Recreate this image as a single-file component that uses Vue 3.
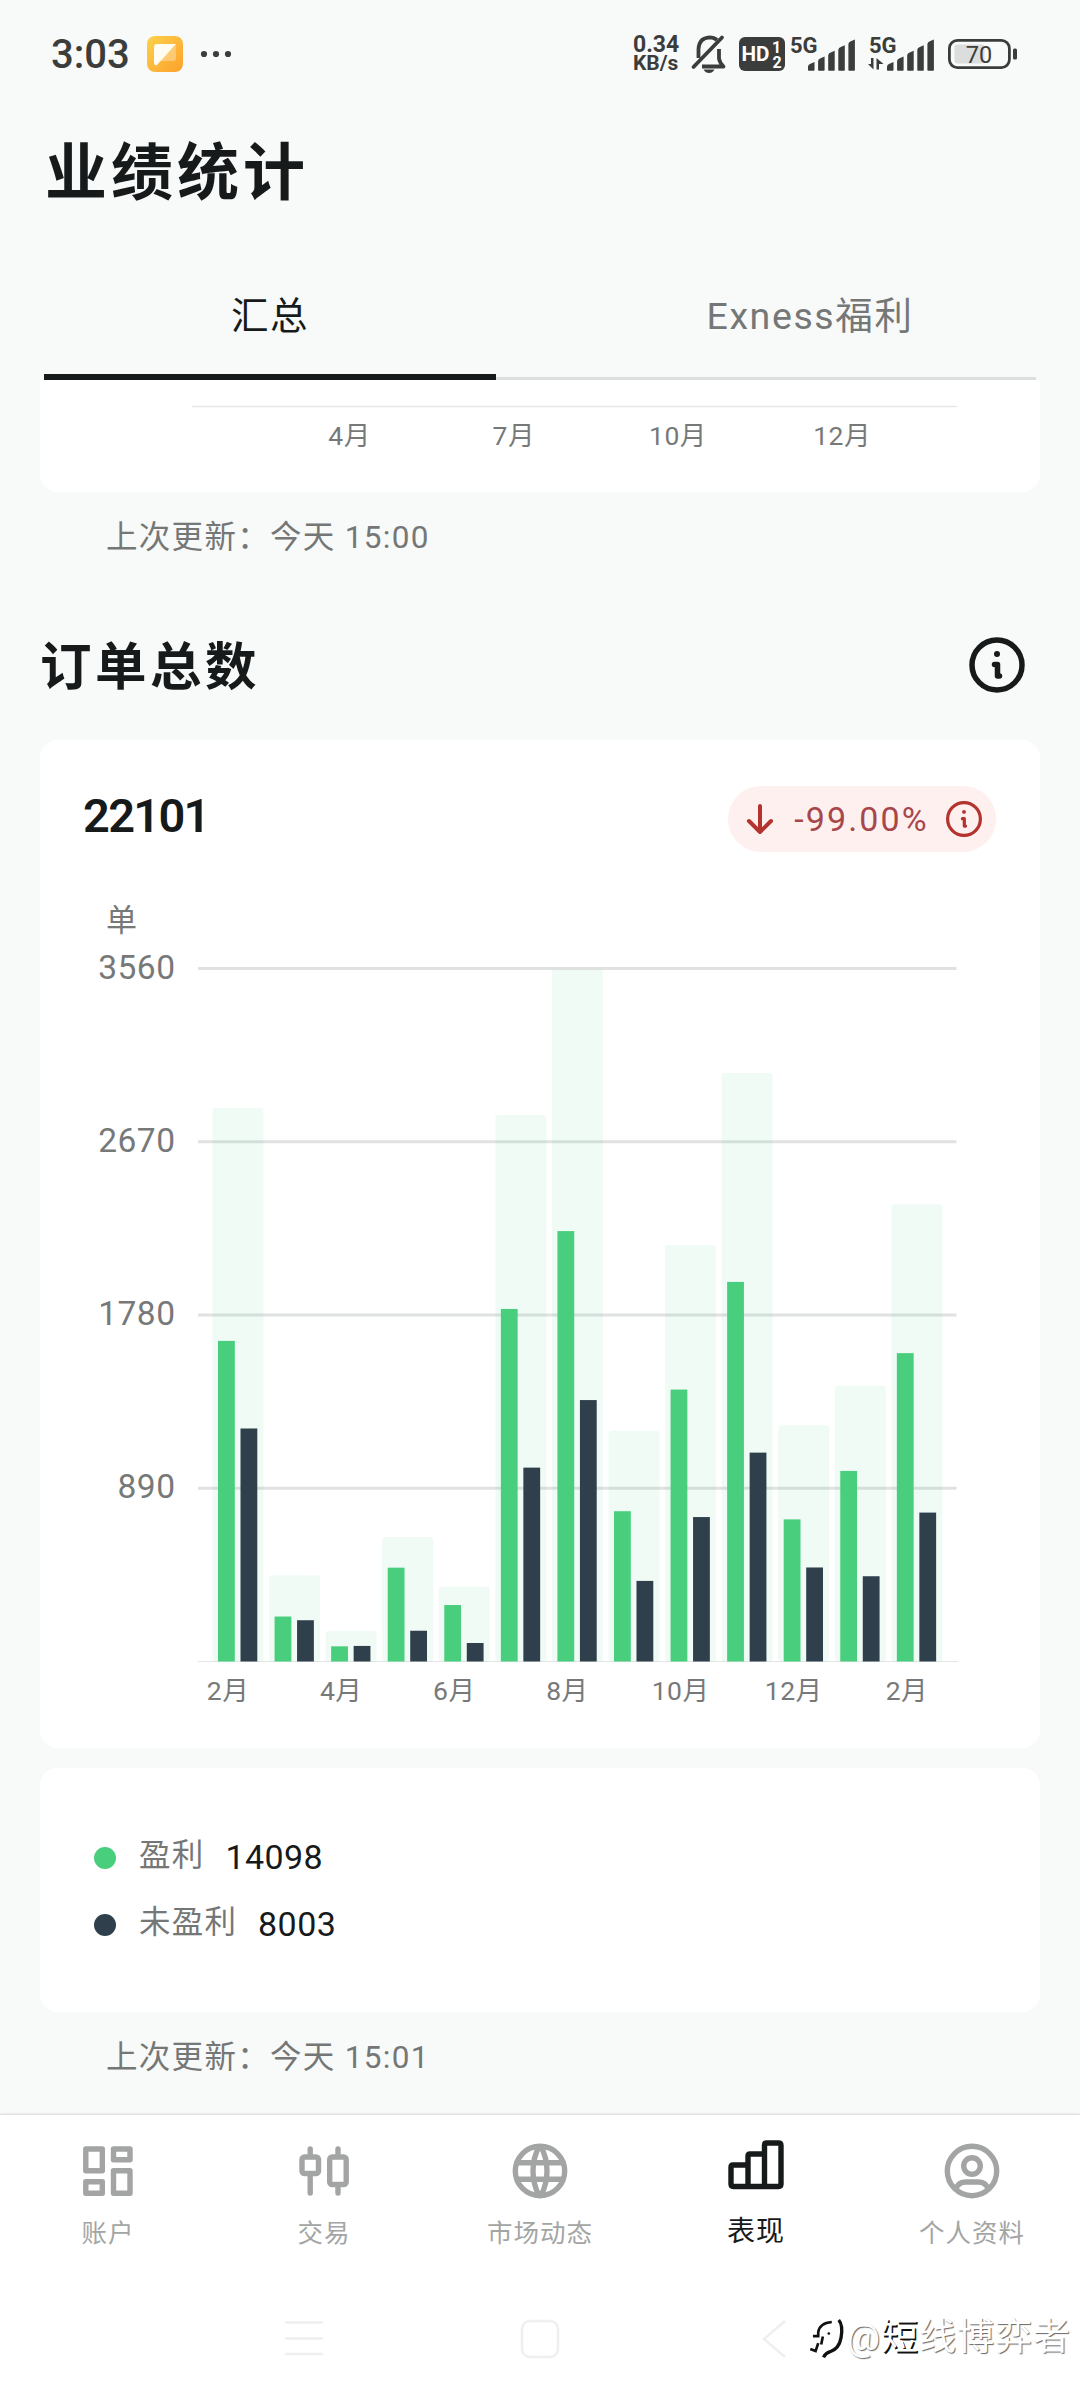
<template>
  <div class="screen">
    <!-- 状态栏 -->
    <header class="status-bar">
      <div class="status-left">
        <span class="clock">3:03</span>
        <svg class="app-badge" viewBox="0 0 36 36">
          <defs>
            <linearGradient id="badge" x1="0" y1="0" x2="1" y2="1">
              <stop offset="0" stop-color="#fcd14a" />
              <stop offset="1" stop-color="#fda12c" />
            </linearGradient>
          </defs>
          <rect width="36" height="36" rx="8" fill="url(#badge)" />
          <path d="M8 29 29 9v13q0 3-3 3H13z" fill="#fff" opacity=".3" />
          <path d="M7 11q0-3 3-3h19L10 29q-3 1-3-2z" fill="#fffdf2" />
        </svg>
        <svg class="more" viewBox="0 0 32 8">
          <circle v-for="x in [4, 16, 28]" :key="x" :cx="x" cy="4" r="3.1" />
        </svg>
      </div>
      <div class="status-right">
        <div class="net-speed"><span>0.34</span><span>KB/s</span></div>
        <svg class="bell" viewBox="0 0 34 38">
          <path d="M6.500 23V14Q7 3 17.500 2.300q4.500 0 7.500 2.700M10 31.500h21.500q-4-4-4.500-8V14" fill="none" stroke="#3b3d3c" stroke-width="3.800" stroke-linejoin="round" />
          <path d="M1.500 32 30 2.500" stroke="#3b3d3c" stroke-width="3.800" stroke-linecap="round" />
          <path d="M11.500 34.500h11q-2 3.500-5.500 3.500t-5.500-3.500z" />
        </svg>
        <svg class="hd" viewBox="0 0 46 34">
          <rect width="46" height="34" rx="6" />
          <text x="2.500" y="24" font-size="21" textLength="28" lengthAdjust="spacingAndGlyphs" class="hd-text">HD</text>
          <text x="33" y="15.500" font-size="16" class="hd-text">1</text>
          <text x="33.500" y="30.500" font-size="16" class="hd-text">2</text>
        </svg>
        <svg class="signal" viewBox="0 0 64 36">
          <text x="-1" y="17" class="net-type">5G</text>
          <path v-for="(d, i) in signalBars" :key="i" :d="d" />
        </svg>
        <svg class="signal second" viewBox="-2 0 66 36">
          <text x="-1" y="17" class="net-type">5G</text>
          <path d="M-2 28h3v-6h2.500v11.500zM6.500 22v11.500H9V28h4.500z" />
          <path v-for="(d, i) in signalBars" :key="i" :d="d" />
        </svg>
        <svg class="battery" viewBox="0 0 69 30">
          <rect x="6.500" y="5.500" width="30" height="19" rx="3" fill="#dcdedd" />
          <rect x="1.400" y="1.400" width="60" height="27.200" rx="8" fill="none" stroke="#3b3d3c" stroke-width="2.800" />
          <rect x="65" y="9.500" width="4" height="11" rx="1.500" />
          <text x="31" y="23.500" font-size="23.500" text-anchor="middle">70</text>
        </svg>
      </div>
    </header>

    <h1 class="page-title">业绩统计</h1>

    <nav class="tabs">
      <div class="tab active">汇总</div>
      <div class="tab">Exness福利</div>
    </nav>

    <main class="content">
      <section class="card card-prev">
        <svg class="prev-chart" viewBox="0 0 1000 112">
          <line x1="152" y1="26.500" x2="917" y2="26.500" stroke="#e6e8e7" stroke-width="1.500" />
          <text v-for="(m, i) in prevMonths" :key="m" :x="309.500 + i * 164.200" y="64.500" class="month">{{ m }}</text>
        </svg>
      </section>
      <p class="updated">上次更新：今天 15:00</p>

      <div class="section-head">
        <h2>订单总数</h2>
        <svg class="info" viewBox="0 0 56 56">
          <circle cx="28" cy="28" r="25" />
          <circle cx="28" cy="17" r="3" class="dot" />
          <path d="M25.500 27.500h3V39h2" />
        </svg>
      </div>

      <section class="card card-chart">
        <div class="card-head">
          <strong class="total">22101</strong>
          <div class="pill">
            <svg class="arrow" viewBox="0 0 26 30">
              <path d="M13 2v26M2 17l11 11 11-11" />
            </svg>
            <span>-99.00%</span>
            <svg class="info small" viewBox="0 0 56 56">
              <circle cx="28" cy="28" r="25.500" />
              <circle cx="28" cy="17" r="3" class="dot" />
              <path d="M25.500 27.500h3V39h2" />
            </svg>
          </div>
        </div>
        <svg class="chart" viewBox="0 0 1000 896">
          <text x="66" y="79" class="unit">单</text>
          <g v-for="tick in ticks" :key="tick">
            <line x1="158" :y1="toY(tick)" x2="916.500" :y2="toY(tick)" stroke="#e0e2e1" stroke-width="2.800" />
            <text x="135.500" :y="toY(tick) + 10" class="tick">{{ tick }}</text>
          </g>
          <line x1="158" y1="809.500" x2="918" y2="809.500" stroke="#e4e6e5" stroke-width="1" />
          <!-- 每月：总数、盈利、未盈利 -->
          <g v-for="(o, i) in orders" :key="i">
            <rect :x="172.500 + i * step" :y="toY(o[0] + o[1])" width="51" :height="base - toY(o[0] + o[1])" rx="3" class="bar-total" />
            <rect :x="178 + i * step" :y="toY(o[0])" width="16.800" :height="base - toY(o[0])" class="bar-profit" />
            <rect :x="200.500 + i * step" :y="toY(o[1])" width="16.800" :height="base - toY(o[1])" class="bar-loss" />
          </g>
          <text v-for="(m, i) in months" :key="i" :x="188 + i * step * 2" y="848" class="month">{{ m }}</text>
        </svg>
      </section>

      <section class="card card-legend">
        <div v-for="item in legend" :key="item.label" class="legend-row">
          <i class="legend-dot" :class="item.type"></i>
          <span class="legend-label">{{ item.label }}</span>
          <span class="legend-value">{{ item.value }}</span>
        </div>
      </section>
      <p class="updated">上次更新：今天 15:01</p>
    </main>

    <!-- 底部导航 -->
    <nav class="bottom-nav">
      <div class="nav-item">
        <svg viewBox="-31 -28 62 56">
          <rect x="-22.200" y="-22" width="16.500" height="21.800" />
          <rect x="-22.200" y="10.800" width="16.500" height="11.400" />
          <rect x="5.500" y="-22" width="16.500" height="10.800" />
          <rect x="5.500" y="-.2" width="16.500" height="22.400" />
        </svg>
        <span>账户</span>
      </div>
      <div class="nav-item">
        <svg viewBox="-31 -28 62 56">
          <rect x="-22" y="-14" width="16.500" height="16.500" rx="2.500" />
          <rect x="5.700" y="-14" width="16.500" height="27.500" rx="2.500" />
          <path d="M-13.800-22v7M-13.800 4v18M14-22v7M14 15v7" stroke-linecap="round" />
        </svg>
        <span>交易</span>
      </div>
      <div class="nav-item">
        <svg viewBox="-31 -28 62 56">
          <circle r="24.700" />
          <path d="M-23-8.300h46M-23 8.300h46M-1-24.500Q-7-13-7 0t6 24.500M1-24.500Q7-13 7 0t-6 24.500" />
        </svg>
        <span>市场动态</span>
      </div>
      <div class="nav-item active">
        <svg viewBox="-31 -28 62 56">
          <path d="M-25 16V-1q0-2 2-2h15v-9q0-2 2-2H8.500v-9q0-2 2-2h12q2.500 0 2.500 2.500V16q0 2.500-2.500 2.500h-45Q-25 18.500-25 16zM-8-3v21.500M8.500-14v32.500" />
        </svg>
        <span>表现</span>
      </div>
      <div class="nav-item">
        <svg viewBox="-31 -28 62 56">
          <circle r="24.700" />
          <circle cy="-5" r="8.300" />
          <path d="M-16 18q2-7 10-7H6q8 0 10 7" />
        </svg>
        <span>个人资料</span>
      </div>
    </nav>

    <footer class="system-nav">
      <svg viewBox="0 0 40 40"><path d="M1 3.500h38M1 19.500h38M1 35h38" /></svg>
      <svg viewBox="0 0 40 40"><rect x="2" y="2" width="36" height="36" rx="8" /></svg>
      <svg viewBox="0 0 40 40"><path d="M29 2 8 20l21 18" /></svg>
    </footer>

    <div class="watermark">
      <svg viewBox="250 130 115 125">
        <path d="M268 187h16v-12q4-28 41-31M298 188l-5 24" />
        <path d="M284 208l-8 24-16-6" stroke-width="5" />
        <path d="M346 138q14 16 7 54-6 33-33 42-14 4-20 17" class="thick" />
        <circle cx="316" cy="179" r="4" />
      </svg>
      <span><b>@</b><b class="first">短</b>线博弈者</span>
    </div>
  </div>
</template>

<script setup>
const base = 809.5;
const step = 56.57;
const toY = (value) => base - (value / 3560) * 693;

const ticks = [3560, 2670, 1780, 890];
const prevMonths = ['4月', '7月', '10月', '12月'];
const months = ['2月', '4月', '6月', '8月', '10月', '12月', '2月'];

// [盈利, 未盈利]
const orders = [
  [1647, 1197], [231, 212], [78, 80], [482, 158], [290, 95],
  [1811, 996], [2211, 1343], [772, 414], [1397, 742], [1950, 1073],
  [730, 483], [979, 438], [1584, 765]
];

const legend = [
  { label: '盈利', value: 14098, type: 'profit' },
  { label: '未盈利', value: 8003, type: 'loss' }
];

// 信号格，顶部略倾斜
const signalBars = [0, 1, 2, 3, 4].map((i) => {
  const x = 17 + i * 10.1;
  const top = 26.5 - i * 5.6;
  return `M${x} ${top + 4}q0-2 3-3l3.500-1.500V34q0 .7-.7.7h-5.100q-.7 0-.7-.7z`;
});
</script>

<style>
body {
  background: #f8faf9;
}
</style>

<style scoped>
.screen {
  position: relative;
  width: 1080px;
  height: 2400px;
  overflow: hidden;
  display: flex;
  flex-direction: column;
  background: #f8faf9;
  color: #171a1a;
  font-family: Roboto, "Noto Sans CJK SC", sans-serif;
}

svg {
  display: block;
  flex: none;
  overflow: visible;
}

.status-bar {
  height: 108px;
  flex: none;
  display: flex;
  justify-content: space-between;
  align-items: center;
  padding: 0 63px 0 51px;
  color: #3b3d3c;
  fill: #3b3d3c;
}

.status-left,
.status-right {
  display: flex;
  align-items: center;
}

.clock {
  width: 96px;
  font-size: 40px;
  font-weight: 500;
}

.app-badge {
  width: 36px;
  height: 36px;
}

.more {
  width: 32px;
  height: 8px;
  margin-left: 17px;
}

.net-speed {
  width: 48px;
  display: flex;
  flex-direction: column;
  font-size: 23px;
  line-height: 19px;
  font-weight: 700;
  white-space: nowrap;
}

.net-speed span:last-child {
  font-size: 21px;
}

.bell {
  width: 34px;
  height: 38px;
  margin-left: 11px;
}

.hd {
  width: 46px;
  height: 34px;
  margin-left: 13px;
}

.hd-text {
  fill: #fff;
  font-weight: 700;
}

.signal {
  width: 64px;
  height: 36px;
  margin-left: 6px;
}

.signal.second {
  width: 66px;
  margin-left: 13px;
}

.net-type {
  font-size: 22px;
  font-weight: 700;
}

.battery {
  width: 69px;
  height: 30px;
  margin-left: 14px;
}

.page-title {
  margin: 0;
  flex: none;
  height: 126px;
  padding-left: 45px;
  line-height: 131px;
  font-size: 62px;
  font-weight: 700;
  letter-spacing: 4px;
}

.tabs {
  flex: none;
  height: 146px;
  margin: 0 44px;
  box-sizing: border-box;
  display: flex;
  justify-content: space-between;
  box-shadow: inset 0 -3px #dcdfde;
}

.tab {
  width: 452px;
  box-sizing: border-box;
  padding-top: 50px;
  line-height: 64px;
  text-align: center;
  font-size: 37.5px;
  letter-spacing: 1.6px;
  color: #757777;
}

.tab.active {
  color: #171a1a;
  border-bottom: 6px solid #171a1a;
}

.content {
  flex: none;
  height: 1735px;
  padding: 0 40px;
}

.card {
  background: #fff;
  border-radius: 18px;
}

.card-prev {
  height: 112px;
  border-radius: 0 0 18px 18px;
}

.prev-chart {
  width: 1000px;
  height: 112px;
}

.month {
  font-size: 26.5px;
  fill: #777979;
  text-anchor: middle;
  letter-spacing: 0.5px;
}

.updated {
  margin: 0;
  height: 90px;
  line-height: 92px;
  padding-left: 66px;
  font-size: 31.5px;
  letter-spacing: 1.3px;
  color: #757777;
}

.section-head {
  height: 158px;
  box-sizing: border-box;
  padding: 8px 15px 0 0;
  display: flex;
  justify-content: space-between;
  align-items: center;
}

.section-head h2 {
  margin: -6px 0 0;
  font-size: 51.5px;
  font-weight: 700;
  letter-spacing: 3.5px;
}

.info {
  width: 56px;
  height: 56px;
  fill: none;
  stroke: #171a1a;
  stroke-width: 5.5;
  stroke-linecap: round;
  stroke-linejoin: round;
}

.info .dot {
  fill: #171a1a;
  stroke: none;
}

.card-chart {
  height: 1008px;
}

.card-head {
  height: 112px;
  box-sizing: border-box;
  padding: 46px 44px 0 43px;
  display: flex;
  justify-content: space-between;
}

.total {
  line-height: 60px;
  font-size: 47px;
  font-weight: 600;
  letter-spacing: -1.7px;
}

.pill {
  width: 268px;
  height: 66px;
  box-sizing: border-box;
  padding: 0 14px 0 19px;
  border-radius: 33px;
  background: #fdf0ee;
  display: flex;
  align-items: center;
  justify-content: space-between;
  font-size: 34px;
  letter-spacing: 2.1px;
  color: #a8474b;
}

.pill span {
  margin-left: 4px;
}

.arrow {
  width: 26px;
  height: 30px;
  fill: none;
  stroke: #b4332f;
  stroke-width: 4;
  stroke-linecap: round;
  stroke-linejoin: round;
}

.info.small {
  width: 36px;
  height: 36px;
  stroke: #b4332f;
  stroke-width: 5;
}

.info.small .dot {
  fill: #b4332f;
}

.chart {
  width: 1000px;
  height: 896px;
}

.unit {
  font-size: 31px;
  fill: #777979;
}

.tick {
  font-size: 33.5px;
  letter-spacing: 0.5px;
  text-anchor: end;
  fill: #777979;
}

.bar-total {
  fill: rgba(70, 200, 140, 0.08);
}

.bar-profit {
  fill: #48ce7c;
}

.bar-loss {
  fill: #2f404c;
}

.card-legend {
  height: 244px;
  margin-top: 20px;
  box-sizing: border-box;
  padding: 56px 54px 0;
}

.legend-row {
  height: 67px;
  display: flex;
  align-items: center;
  font-size: 31.5px;
  line-height: 40px;
  letter-spacing: 1.2px;
}

.legend-dot {
  width: 22px;
  height: 22px;
  margin-right: 23px;
  border-radius: 50%;
}

.legend-dot.profit {
  background: #48ce7c;
}

.legend-dot.loss {
  background: #2f404c;
}

.legend-label {
  margin-top: -3px;
  color: #757777;
}

.legend-value {
  margin-top: -1px;
  margin-left: 21px;
  font-size: 34px;
  letter-spacing: 0.4px;
}

.bottom-nav {
  flex: none;
  height: 165px;
  display: flex;
  background: #fff;
  box-shadow: 0 -1px 2px rgba(0, 0, 0, 0.14);
}

.nav-item {
  width: 216px;
  display: flex;
  flex-direction: column;
  align-items: center;
  padding-top: 28px;
  font-size: 25.5px;
  letter-spacing: 1px;
  color: #a3a5a4;
}

.nav-item svg {
  width: 62px;
  height: 56px;
  fill: none;
  stroke: currentColor;
  stroke-width: 5.4;
  stroke-linejoin: round;
}

.nav-item span {
  margin-top: 14px;
  line-height: 40px;
}

.nav-item.active {
  padding-top: 25px;
  font-size: 28px;
  color: #171a1a;
}

.nav-item.active span {
  margin-top: 16px;
}

.system-nav {
  flex: none;
  height: 120px;
  box-sizing: border-box;
  padding: 0 284px 2px;
  display: flex;
  justify-content: space-between;
  align-items: center;
  background: #fff;
}

.system-nav svg {
  width: 40px;
  height: 40px;
  fill: none;
  stroke: #efefef;
  stroke-width: 2.5;
}

.watermark {
  position: absolute;
  right: 9px;
  bottom: 34px;
  display: flex;
  align-items: center;
  font-size: 37px;
  line-height: 56px;
  color: #fff;
  letter-spacing: 1px;
  text-shadow: 1px 1px 1px #666;
}

.watermark b {
  font-weight: 400;
}

.watermark .first {
  text-shadow: 1.5px 1.5px 0 #111;
}

.watermark svg {
  width: 38px;
  height: 42px;
  margin-right: 2px;
  fill: #111;
}

.watermark path {
  fill: none;
  stroke: #111;
  stroke-width: 8;
}

.watermark .thick {
  stroke-width: 10;
}
</style>
